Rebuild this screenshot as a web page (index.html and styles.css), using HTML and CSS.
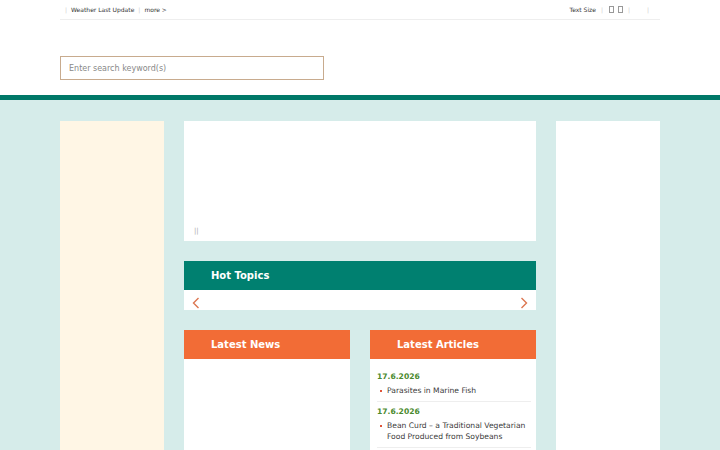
FILE: index.html
```html
<!DOCTYPE html>
<html lang="en">
<head>
    <meta charset="UTF-8">
    <meta name="viewport" content="width=device-width, initial-scale=1.0">
    <title>Home</title>
    <link rel="stylesheet" href="styles.css">
</head>
<body>

    <div class="topbar">
        <div class="wrap topbar-inner">
            <div class="top-left">
                <span class="sep">|</span>
                <span>Weather Last Update</span>
                <span class="sep">|</span>
                <a href="#">more &gt;</a>
            </div>
            <div class="top-right">
                <span>Text Size</span>
                <span class="sep">|</span>
                <span class="box"></span>
                <span class="box box-2"></span>
                <span class="sep">|</span>
                <span class="blank"></span>
                <span class="sep">|</span>
            </div>
        </div>
    </div>

    <header class="header">
        <div class="wrap">
            <input type="text" class="search" placeholder="Enter search keyword(s)">
        </div>
    </header>

    <main class="main">
        <div class="wrap layout">
            <aside class="side-left"></aside>

            <div class="center">
                <div class="banner">
                    <span class="pause">||</span>
                </div>

                <section class="hot">
                    <h2 class="box-title teal">Hot Topics</h2>
                    <div class="hot-nav">
                        <svg class="arrow" width="8" height="12" viewBox="0 0 8 12"><path d="M6.5 1 L1.5 6 L6.5 11" fill="none" stroke="#dc7650" stroke-width="1.4"/></svg>
                        <svg class="arrow" width="8" height="12" viewBox="0 0 8 12"><path d="M1.5 1 L6.5 6 L1.5 11" fill="none" stroke="#dc7650" stroke-width="1.4"/></svg>
                    </div>
                </section>

                <div class="news-row">
                    <section class="panel">
                        <h2 class="box-title orange">Latest News</h2>
                    </section>
                    <section class="panel">
                        <h2 class="box-title orange">Latest Articles</h2>
                        <ul class="articles">
                            <li>
                                <div class="date">17.6.2026</div>
                                <a href="#" class="item">Parasites in Marine Fish</a>
                            </li>
                            <li>
                                <div class="date">17.6.2026</div>
                                <a href="#" class="item">Bean Curd – a Traditional Vegetarian Food Produced from Soybeans</a>
                            </li>
                        </ul>
                    </section>
                </div>
            </div>

            <aside class="side-right"></aside>
        </div>
    </main>

</body>
</html>
```

FILE: styles.css
```css
body {
    margin: 0;
    font-family: "DejaVu Sans", Verdana, sans-serif;
    color: #333;
    background-color: #fff;
}
a {
    color: inherit;
    text-decoration: none;
}
.wrap {
    width: 600px;
    margin: 0 auto;
}
.topbar-inner {
    display: flex;
    justify-content: space-between;
    align-items: center;
    height: 19px;
    border-bottom: 1px solid #eee;
    font-size: 6px;
    color: #333;
}
.top-left, .top-right {
    display: flex;
    align-items: center;
    gap: 4px;
}
.top-left {
    padding-left: 5px;
}
.top-right {
    gap: 5px;
    padding-right: 11px;
}
.sep {
    color: #ccc;
}
.box {
    display: inline-block;
    width: 3px;
    height: 5px;
    border: 1px solid #999;
    margin-left: 1px;
}
.box-2 {
    margin-left: -1px;
}
.blank {
    width: 7px;
}
.header {
    height: 39px;
    padding-top: 36px;
    border-bottom: 5px solid #007868;
}
.search {
    display: block;
    width: 264px;
    height: 24px;
    box-sizing: border-box;
    border: 1px solid #c8ab8e;
    padding: 0 8px;
    font-family: inherit;
    font-size: 8px;
    outline: none;
}
.search::placeholder {
    color: #888;
}
.main {
    background-color: #d6ecea;
    padding-top: 21px;
    min-height: 400px;
}
.layout {
    display: grid;
    grid-template-columns: 104px 352px 104px;
    gap: 20px;
    align-items: start;
}
.side-left {
    background-color: #fff6e5;
    height: 400px;
}
.side-right {
    background-color: #fff;
    height: 400px;
}
.center {
    display: flex;
    flex-direction: column;
    gap: 20px;
}
.banner {
    background-color: #fff;
    height: 120px;
    position: relative;
}
.pause {
    position: absolute;
    left: 10px;
    bottom: 6px;
    font-size: 7px;
    color: #aaa;
}
.box-title {
    margin: 0;
    color: #fff;
    font-size: 10px;
    font-weight: bold;
    padding-left: 27px;
    height: 29px;
    line-height: 29px;
}
.teal {
    background-color: #008070;
}
.orange {
    background-color: #f26c36;
}
.hot-nav {
    background-color: #fff;
    height: 20px;
    display: flex;
    justify-content: space-between;
    align-items: center;
    padding: 6px 8px 0 8px;
    box-sizing: border-box;
}
.news-row {
    display: grid;
    grid-template-columns: 1fr 1fr;
    gap: 20px;
}
.panel {
    background-color: #fff;
    height: 200px;
}
.articles {
    list-style: none;
    margin: 0;
    padding: 8px 5px 0 7px;
}
.articles li {
    border-bottom: 1px solid #eee;
    padding: 4px 0 5px;
}
.date {
    color: #4a8a2e;
    font-weight: bold;
    font-size: 7.6px;
    line-height: 12px;
}
.item {
    display: block;
    position: relative;
    padding-left: 10px;
    margin-top: 2px;
    font-size: 7.6px;
    line-height: 11px;
    color: #3a3a3a;
}
.item::before {
    content: "";
    position: absolute;
    left: 3px;
    top: 5px;
    width: 2px;
    height: 2px;
    background-color: #e0553a;
}
```
